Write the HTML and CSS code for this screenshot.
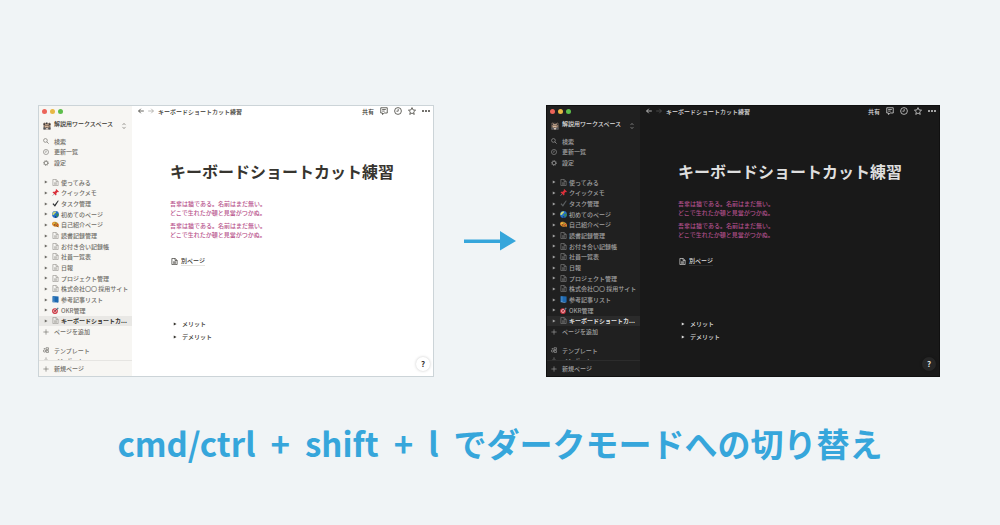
FILE: index.html
```html
<!DOCTYPE html>
<html lang="ja">
<head>
<meta charset="utf-8">
<meta name="viewport" content="width=device-width, initial-scale=1">
<title>ダークモードへの切り替え</title>
<link rel="stylesheet" href="styles.css">
</head>
<body>
<svg class="sprite" aria-hidden="true">
  <symbol id="search" viewBox="0 0 16 16"><circle cx="6.5" cy="6.5" r="5" fill="none" stroke="currentColor" stroke-width="1.7"/><path d="M10.3 10.3L15 15" stroke="currentColor" stroke-width="1.9"/></symbol>
  <symbol id="clock" viewBox="0 0 16 16"><circle cx="8" cy="8" r="6.8" fill="none" stroke="currentColor" stroke-width="1.5"/><path d="M8.4 4v4.4H4.8" fill="none" stroke="currentColor" stroke-width="1.4"/></symbol>
  <symbol id="gear" viewBox="0 0 16 16"><circle cx="8" cy="8" r="4.8" fill="none" stroke="currentColor" stroke-width="2"/><circle cx="8" cy="8" r="6.6" fill="none" stroke="currentColor" stroke-width="1.8" stroke-dasharray="2.6 2.58"/></symbol>
  <symbol id="doc" viewBox="0 0 16 16"><path d="M2 1h7.5L14 5.5V15H2zM9.3 1v4.8H14" fill="none" stroke="currentColor" stroke-width="1.6"/><path d="M4.7 8.4h6.6M4.7 10.4h6.6M4.7 12.4h6.6" stroke="currentColor" stroke-width="1.2"/></symbol>
  <symbol id="pin" viewBox="0 0 16 16"><path d="M6.5 9.5L1 15.5" stroke="#8c9299" stroke-width="1.5"/><path d="M9.6 0l6.400 6-1.900 1.200-1.500-.3-2.600 2.900.3 3.400-1.600 1.600L1 7.400l1.600-1.400 3.500.1 2.800-2.700L8.500 1.700z" fill="#d9303a"/></symbol>
  <symbol id="check" viewBox="0 0 16 16"><path d="M1 9.300l2.700-1.700 2.300 3.200L13.500 1l2 .8L6.800 15.500z" fill="currentColor"/></symbol>
  <symbol id="globe" viewBox="0 0 16 16"><circle cx="8" cy="8" r="7.800" fill="#2471c8"/><path d="M2 4C4 1 7 .6 9.500 1L8.300 4.300 5.500 6 5 8.600 1 9C.600 7 1 5.500 2 4z" fill="#d4dc72"/><path d="M10 7l4.800-1.500c1 3-.3 6-2.800 8L9.700 10z" fill="#3b8b4d"/><path d="M6 13l3-1 2 2.300-3 .9z" fill="#172f58"/></symbol>
  <symbol id="palette" viewBox="0 0 16 16"><path d="M0 6C0 2.500 5 1 9 2c4 1 7 4 7 8 0 3-2 4.500-4 3.500-2-.9-3 .5-5.500-.5C2.500 11.500 0 9 0 6z" fill="#d78a2e"/><circle cx="4.500" cy="5.300" r="1.700" fill="#f4d34d"/><circle cx="9" cy="4.700" r="1.500" fill="#4b9b4c"/><circle cx="12.300" cy="8.600" r="1.500" fill="#c83d32"/><circle cx="6" cy="9" r="1.500" fill="#73381b"/><path d="M8 9l6.500 5" stroke="#68401e" stroke-width="1.500"/></symbol>
  <symbol id="book" viewBox="0 0 16 16"><path d="M2 0l13 1v13l-2 1.500L1 14.500V1z" fill="#1f69b0"/><path d="M4.300 1V14" stroke="#79b4e8" stroke-width="1.200"/><path d="M3 13.800l9 1V14l-9-.8z" fill="#fff"/></symbol>
  <symbol id="target" viewBox="0 0 16 16"><circle cx="6.800" cy="9.200" r="6.600" fill="#cc3440"/><circle cx="6.800" cy="9.200" r="4" fill="#f4dada"/><circle cx="6.800" cy="9.200" r="2.500" fill="#cc3440"/><path d="M7 9l6-6" stroke="#394a57" stroke-width="1.500"/><path d="M11 3.500L14 .8v1.800h1.800L13 5.500h-2z" fill="#4e8a9b"/></symbol>
  <symbol id="plus" viewBox="0 0 16 16"><path d="M8 1v14M1 8h14" stroke="currentColor" stroke-width="1.700"/></symbol>
  <symbol id="template" viewBox="0 0 16 16"><circle cx="4" cy="10.500" r="3" fill="none" stroke="currentColor" stroke-width="1.800"/><path d="M8 2h6.500v5H8zM8.500 9.500h6v5h-6zM2 4h4" fill="none" stroke="currentColor" stroke-width="1.800"/></symbol>
  <symbol id="import" viewBox="0 0 16 16"><path d="M8 1v9M4.500 7L8 10.500 11.500 7M2 10v5h12v-5" fill="none" stroke="currentColor" stroke-width="1.500"/></symbol>
  <symbol id="tri" viewBox="0 0 16 16"><path d="M3 2l11 6-11 6z" fill="currentColor"/></symbol>
  <symbol id="updown" viewBox="0 0 16 16"><path d="M4 5.500L8 1l4 4.500M4 10.500L8 15l4-4.500" fill="none" stroke="currentColor" stroke-width="1.700"/></symbol>
  <symbol id="back" viewBox="0 0 16 16"><path d="M15.500 8H1.500M7.500 2L1.500 8l6 6" fill="none" stroke="currentColor" stroke-width="2"/></symbol>
  <symbol id="forward" viewBox="0 0 16 16"><path d="M.5 8h14M8.500 2l6 6-6 6" fill="none" stroke="currentColor" stroke-width="1.800"/></symbol>
  <symbol id="comment" viewBox="0 0 16 16"><path d="M1.500 1.500h13v10.500H8.500L5 15v-3H1.500z" fill="none" stroke="currentColor" stroke-width="1.500"/><path d="M4.300 5h7.400M4.300 8.200h5" stroke="currentColor" stroke-width="1.400"/></symbol>
  <symbol id="star" viewBox="0 0 16 16"><path d="M8 1.200l2.100 4.700 5 .5-3.800 3.400 1.200 5L8 12.100l-4.500 2.700 1.200-5L.9 6.400l5-.5z" fill="none" stroke="currentColor" stroke-width="1.500"/></symbol>
  <symbol id="dots" viewBox="0 0 16 16"><circle cx="2" cy="8" r="1.900" fill="currentColor"/><circle cx="8" cy="8" r="1.900" fill="currentColor"/><circle cx="14" cy="8" r="1.900" fill="currentColor"/></symbol>
  <symbol id="avatar" viewBox="0 0 16 16"><path d="M1 2l3-1 2 2h4l3-2 2 2v12H1z" fill="#8b7565"/><path d="M1 3h3v3H1zM12 3h3v3h-3zM6 1h3v3H6z" fill="#3d3a3b"/><path d="M4 5h7v6H4z" fill="#d6b89c"/><path d="M5 6h2v2H5zM9 6h2v2H9zM6 10h3v1H6z" fill="#493b36"/><path d="M1 11h4v4H1zM11 11h4v4h-4z" fill="#4d555e"/><path d="M6 12h4v3H6z" fill="#c9c2bd"/></symbol>
</svg>

<main class="page">
  <div class="compare">
    <section class="window light" aria-label="ライトモード">
      <aside class="sidebar">
        <div class="lights"><i class="dot red"></i><i class="dot yellow"></i><i class="dot green"></i></div>
        <button class="workspace"><svg class="avatar"><use href="#avatar"/></svg><span class="name">解説用ワークスペース</span><svg class="icon"><use href="#updown"/></svg></button>
        <nav class="menu">
          <a class="row" href="#"><svg class="icon"><use href="#search"/></svg>検索</a>
          <a class="row" href="#"><svg class="icon"><use href="#clock"/></svg>更新一覧</a>
          <a class="row" href="#"><svg class="icon"><use href="#gear"/></svg>設定</a>
        </nav>
        <nav class="pages">
          <a class="row item" href="#"><svg class="tri"><use href="#tri"/></svg><svg class="emoji line"><use href="#doc"/></svg>使ってみる</a>
          <a class="row item" href="#"><svg class="tri"><use href="#tri"/></svg><svg class="emoji"><use href="#pin"/></svg>クイックメモ</a>
          <a class="row item" href="#"><svg class="tri"><use href="#tri"/></svg><svg class="emoji tick"><use href="#check"/></svg>タスク管理</a>
          <a class="row item" href="#"><svg class="tri"><use href="#tri"/></svg><svg class="emoji"><use href="#globe"/></svg>初めてのページ</a>
          <a class="row item" href="#"><svg class="tri"><use href="#tri"/></svg><svg class="emoji"><use href="#palette"/></svg>自己紹介ページ</a>
          <a class="row item" href="#"><svg class="tri"><use href="#tri"/></svg><svg class="emoji line"><use href="#doc"/></svg>読書記録管理</a>
          <a class="row item" href="#"><svg class="tri"><use href="#tri"/></svg><svg class="emoji line"><use href="#doc"/></svg>お付き合い記録帳</a>
          <a class="row item" href="#"><svg class="tri"><use href="#tri"/></svg><svg class="emoji line"><use href="#doc"/></svg>社員一覧表</a>
          <a class="row item" href="#"><svg class="tri"><use href="#tri"/></svg><svg class="emoji line"><use href="#doc"/></svg>日報</a>
          <a class="row item" href="#"><svg class="tri"><use href="#tri"/></svg><svg class="emoji line"><use href="#doc"/></svg>プロジェクト管理</a>
          <a class="row item" href="#"><svg class="tri"><use href="#tri"/></svg><svg class="emoji line"><use href="#doc"/></svg>株式会社〇〇 採用サイト</a>
          <a class="row item" href="#"><svg class="tri"><use href="#tri"/></svg><svg class="emoji"><use href="#book"/></svg>参考記事リスト</a>
          <a class="row item" href="#"><svg class="tri"><use href="#tri"/></svg><svg class="emoji"><use href="#target"/></svg>OKR管理</a>
          <a class="row item current" href="#" aria-current="page"><svg class="tri"><use href="#tri"/></svg><svg class="emoji line"><use href="#doc"/></svg>キーボードショートカ...</a>
          <a class="row" href="#"><svg class="icon"><use href="#plus"/></svg>ページを追加</a>
        </nav>
        <nav class="tools">
          <a class="row" href="#"><svg class="icon"><use href="#template"/></svg>テンプレート</a>
          <a class="row" href="#"><svg class="icon"><use href="#import"/></svg>インポート</a>
        </nav>
        <button class="row new"><svg class="icon"><use href="#plus"/></svg>新規ページ</button>
      </aside>
      <div class="content">
        <header class="topbar">
          <button aria-label="戻る"><svg class="icon"><use href="#back"/></svg></button>
          <button class="faint" aria-label="進む"><svg class="icon"><use href="#forward"/></svg></button>
          <span class="crumb">キーボードショートカット練習</span>
          <div class="actions">
            <button>共有</button>
            <button aria-label="コメント"><svg class="action"><use href="#comment"/></svg></button>
            <button aria-label="更新履歴"><svg class="action"><use href="#clock"/></svg></button>
            <button aria-label="お気に入り"><svg class="action"><use href="#star"/></svg></button>
            <button aria-label="その他"><svg class="action"><use href="#dots"/></svg></button>
          </div>
        </header>
        <article class="document">
          <h1 class="title">キーボードショートカット練習</h1>
          <p class="quote">吾輩は猫である。名前はまだ無い。<br>どこで生れたか頓と見當がつかぬ。</p>
          <p class="quote">吾輩は猫である。名前はまだ無い。<br>どこで生れたか頓と見當がつかぬ。</p>
          <a class="subpage" href="#"><svg class="emoji"><use href="#doc"/></svg><span class="under">別ページ</span></a>
          <div class="toggles">
            <button class="toggle"><svg class="tri"><use href="#tri"/></svg>メリット</button>
            <button class="toggle"><svg class="tri"><use href="#tri"/></svg>デメリット</button>
          </div>
        </article>
        <button class="help" aria-label="ヘルプ">?</button>
      </div>
    </section>

    <svg class="arrow" viewBox="0 0 52 20" aria-hidden="true"><path d="M0 8.500h36V0l16 10-16 9.500V12H0z" fill="currentColor"/></svg>

    <section class="window dark" aria-label="ダークモード">
      <aside class="sidebar">
        <div class="lights"><i class="dot red"></i><i class="dot yellow"></i><i class="dot green"></i></div>
        <button class="workspace"><svg class="avatar"><use href="#avatar"/></svg><span class="name">解説用ワークスペース</span><svg class="icon"><use href="#updown"/></svg></button>
        <nav class="menu">
          <a class="row" href="#"><svg class="icon"><use href="#search"/></svg>検索</a>
          <a class="row" href="#"><svg class="icon"><use href="#clock"/></svg>更新一覧</a>
          <a class="row" href="#"><svg class="icon"><use href="#gear"/></svg>設定</a>
        </nav>
        <nav class="pages">
          <a class="row item" href="#"><svg class="tri"><use href="#tri"/></svg><svg class="emoji line"><use href="#doc"/></svg>使ってみる</a>
          <a class="row item" href="#"><svg class="tri"><use href="#tri"/></svg><svg class="emoji"><use href="#pin"/></svg>クイックメモ</a>
          <a class="row item" href="#"><svg class="tri"><use href="#tri"/></svg><svg class="emoji tick"><use href="#check"/></svg>タスク管理</a>
          <a class="row item" href="#"><svg class="tri"><use href="#tri"/></svg><svg class="emoji"><use href="#globe"/></svg>初めてのページ</a>
          <a class="row item" href="#"><svg class="tri"><use href="#tri"/></svg><svg class="emoji"><use href="#palette"/></svg>自己紹介ページ</a>
          <a class="row item" href="#"><svg class="tri"><use href="#tri"/></svg><svg class="emoji line"><use href="#doc"/></svg>読書記録管理</a>
          <a class="row item" href="#"><svg class="tri"><use href="#tri"/></svg><svg class="emoji line"><use href="#doc"/></svg>お付き合い記録帳</a>
          <a class="row item" href="#"><svg class="tri"><use href="#tri"/></svg><svg class="emoji line"><use href="#doc"/></svg>社員一覧表</a>
          <a class="row item" href="#"><svg class="tri"><use href="#tri"/></svg><svg class="emoji line"><use href="#doc"/></svg>日報</a>
          <a class="row item" href="#"><svg class="tri"><use href="#tri"/></svg><svg class="emoji line"><use href="#doc"/></svg>プロジェクト管理</a>
          <a class="row item" href="#"><svg class="tri"><use href="#tri"/></svg><svg class="emoji line"><use href="#doc"/></svg>株式会社〇〇 採用サイト</a>
          <a class="row item" href="#"><svg class="tri"><use href="#tri"/></svg><svg class="emoji"><use href="#book"/></svg>参考記事リスト</a>
          <a class="row item" href="#"><svg class="tri"><use href="#tri"/></svg><svg class="emoji"><use href="#target"/></svg>OKR管理</a>
          <a class="row item current" href="#" aria-current="page"><svg class="tri"><use href="#tri"/></svg><svg class="emoji line"><use href="#doc"/></svg>キーボードショートカ...</a>
          <a class="row" href="#"><svg class="icon"><use href="#plus"/></svg>ページを追加</a>
        </nav>
        <nav class="tools">
          <a class="row" href="#"><svg class="icon"><use href="#template"/></svg>テンプレート</a>
          <a class="row" href="#"><svg class="icon"><use href="#import"/></svg>インポート</a>
        </nav>
        <button class="row new"><svg class="icon"><use href="#plus"/></svg>新規ページ</button>
      </aside>
      <div class="content">
        <header class="topbar">
          <button aria-label="戻る"><svg class="icon"><use href="#back"/></svg></button>
          <button class="faint" aria-label="進む"><svg class="icon"><use href="#forward"/></svg></button>
          <span class="crumb">キーボードショートカット練習</span>
          <div class="actions">
            <button>共有</button>
            <button aria-label="コメント"><svg class="action"><use href="#comment"/></svg></button>
            <button aria-label="更新履歴"><svg class="action"><use href="#clock"/></svg></button>
            <button aria-label="お気に入り"><svg class="action"><use href="#star"/></svg></button>
            <button aria-label="その他"><svg class="action"><use href="#dots"/></svg></button>
          </div>
        </header>
        <article class="document">
          <h1 class="title">キーボードショートカット練習</h1>
          <p class="quote">吾輩は猫である。名前はまだ無い。<br>どこで生れたか頓と見當がつかぬ。</p>
          <p class="quote">吾輩は猫である。名前はまだ無い。<br>どこで生れたか頓と見當がつかぬ。</p>
          <a class="subpage" href="#"><svg class="emoji"><use href="#doc"/></svg><span class="under">別ページ</span></a>
          <div class="toggles">
            <button class="toggle"><svg class="tri"><use href="#tri"/></svg>メリット</button>
            <button class="toggle"><svg class="tri"><use href="#tri"/></svg>デメリット</button>
          </div>
        </article>
        <button class="help" aria-label="ヘルプ">?</button>
      </div>
    </section>
  </div>
  <p class="caption"><kbd>cmd/ctrl</kbd><span>+</span><kbd>shift</kbd><span>+</span><kbd>l</kbd><span>でダークモードへの切り替え</span></p>
</main>
</body>
</html>
```
FILE: styles.css
```css
* { box-sizing: border-box; }

body {
  margin: 0;
  background: #f0f4f6;
  font-family: "Noto Sans CJK JP", "Noto Sans", sans-serif;
}

a { color: inherit; text-decoration: none; }

button {
  margin: 0;
  padding: 0;
  border: 0;
  background: none;
  color: inherit;
  font: inherit;
  text-align: left;
}

svg { display: block; flex: none; }
.sprite { position: absolute; width: 0; height: 0; }

.page { padding-top: 105px; }

.compare {
  display: grid;
  grid-template-columns: 396fr 112px 394fr;
  align-items: center;
  padding: 0 60px 0 38px;
}

.arrow { width: 52px; height: 20px; justify-self: center; color: #36a6db; }

.window {
  display: grid;
  grid-template-columns: 93px 1fr;
  min-height: 272px;
  border: 1px solid var(--frame);
  background: var(--paper);
  color: var(--ink);
  font-size: 6px;
  line-height: 9px;
  font-weight: 500;
}

.light {
  --frame: #ccd4d8;
  --paper: #ffffff;
  --side: #f7f6f3;
  --ink: #37352f;
  --muted: #6f6d67;
  --faint: #9d9b96;
  --active: #e9e8e5;
  --rule: #e6e5e2;
  --pink: #b8538c;
  --help: #ffffff;
}

.dark {
  --frame: #101010;
  --paper: #191919;
  --side: #202020;
  --ink: #dedede;
  --muted: #a0a0a0;
  --faint: #5c5c5c;
  --active: #2b2b2b;
  --rule: #2c2c2c;
  --pink: #b04f8a;
  --help: #262626;
}

.sidebar {
  display: flex;
  flex-direction: column;
  min-width: 0;
  background: var(--side);
  color: var(--muted);
}

.lights { display: flex; align-items: center; gap: 3px; height: 10px; padding-left: 3px; }
.dot { width: 5px; height: 5px; border-radius: 50%; }
.red { background: #ec6459; }
.yellow { background: #e8b844; }
.green { background: #5dbe4b; }

.workspace {
  display: flex;
  align-items: center;
  gap: 3px;
  height: 20px;
  padding: 0 5px 0 4px;
  color: var(--ink);
  white-space: nowrap;
}
.workspace .name { flex: 1; padding-bottom: 6px; }
.workspace .icon { color: var(--muted); }
.avatar { width: 8px; height: 8px; }

.menu { display: grid; grid-auto-rows: 1fr; height: 32px; }
.pages { display: grid; grid-auto-rows: 1fr; flex: 1; margin-top: 9px; }
.tools { height: 23px; padding-top: 8px; overflow: hidden; }
.tools .row { height: 10px; }

.row {
  display: flex;
  align-items: center;
  gap: 5px;
  min-height: 0;
  padding-left: 4px;
  white-space: nowrap;
}
.item { gap: 2px; padding-left: 5px; }
.item .emoji { margin-left: 2px; }
.item .tri { color: var(--muted); }
.current { background: var(--active); color: var(--ink); font-weight: 700; }
.new { height: 16px; border-top: 1px solid var(--rule); }

.icon { width: 6px; height: 6px; }
.action { width: 8px; height: 8px; }
.emoji { width: 7px; height: 7px; }
.line { color: var(--faint); }
.tick { color: #2d3033; }
.dark .tick { color: #5b5f61; }
.dark .line { color: #7c7c7c; }
.tri { width: 4px; height: 4px; }

.content { position: relative; min-width: 0; }

.topbar { display: flex; align-items: center; gap: 4px; height: 10px; padding: 0 3px 0 6px; white-space: nowrap; }
.faint { color: var(--faint); }
.actions { display: flex; align-items: center; gap: 6px; margin-left: auto; }

.document { padding: 43px 0 0 38px; }
.title { margin: 0 0 16px; font-size: 16px; line-height: 24px; font-weight: 700; white-space: nowrap; }
.quote { margin: 0 0 4px; color: var(--pink); }

.subpage { display: flex; align-items: center; gap: 3px; margin-top: 17px; padding-left: 1px; }
.under { border-bottom: 1px solid var(--rule); }

.toggles { display: grid; gap: 4px; justify-items: start; margin-top: 53px; }
.toggle { display: flex; align-items: center; gap: 5px; padding-left: 3px; }

.help {
  position: absolute;
  right: 3px;
  bottom: 5px;
  width: 14px;
  height: 14px;
  border-radius: 50%;
  background: var(--help);
  box-shadow: 0 0 3px rgba(0, 0, 0, 0.22);
  font-size: 8px;
  line-height: 14px;
  font-weight: 700;
  text-align: center;
}

.caption {
  display: flex;
  justify-content: center;
  gap: 15px;
  margin: 42px 0 0;
  color: #36a6db;
  font-size: 33px;
  line-height: 48px;
  font-weight: 700;
  white-space: nowrap;
}
.caption kbd { font: inherit; }
```
